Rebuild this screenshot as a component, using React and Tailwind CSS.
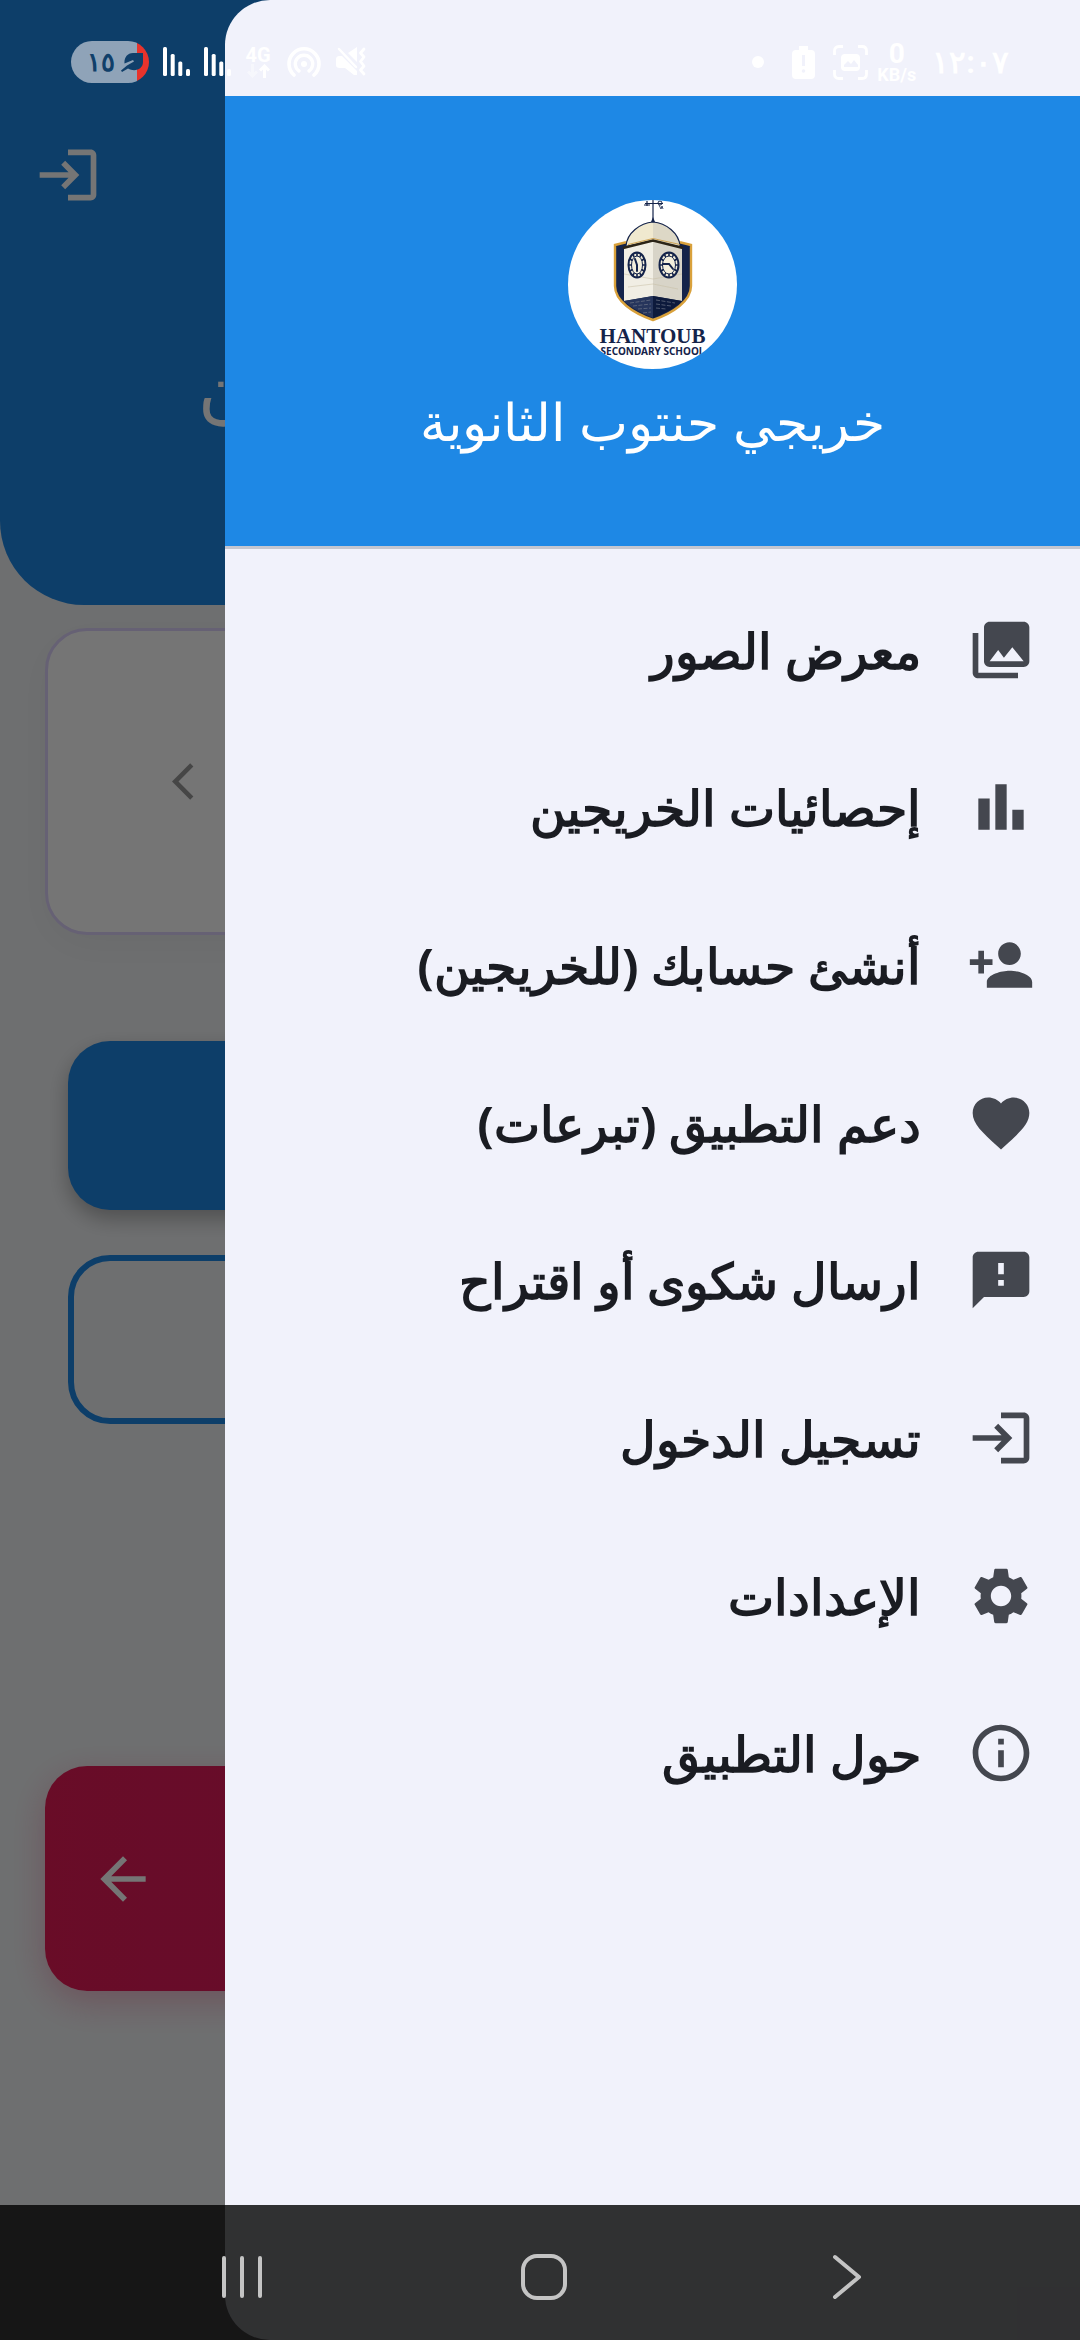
import {
  MdArrowBack,
  MdBarChart,
  MdFavorite,
  MdFeedback,
  MdInfoOutline,
  MdLogin,
  MdPersonAdd,
  MdPhotoLibrary,
  MdSettings,
} from "react-icons/md";

const menuItems = [
  { label: "معرض الصور", icon: MdPhotoLibrary },
  { label: "إحصائيات الخريجين", icon: MdBarChart },
  { label: "أنشئ حسابك (للخريجين)", icon: MdPersonAdd },
  { label: "دعم التطبيق (تبرعات)", icon: MdFavorite },
  { label: "ارسال شكوى أو اقتراح", icon: MdFeedback },
  { label: "تسجيل الدخول", icon: MdLogin },
  { label: "الإعدادات", icon: MdSettings },
  { label: "حول التطبيق", icon: MdInfoOutline },
];

const clockAngles = [0, 30, 60, 90, 120, 150, 180, 210, 240, 270, 300, 330];

function ClockFace({ x, rx, hands }) {
  return (
    <g transform={`translate(${x} 65)`}>
      <ellipse rx={rx} ry="12.5" fill="#f3eedc" stroke="#14234a" strokeWidth="2" />
      <ellipse rx={rx - 3} ry="9" fill="none" stroke="#14234a" strokeWidth="1" />
      {clockAngles.map((a) => {
        const s = Math.sin((a * Math.PI) / 180);
        const c = Math.cos((a * Math.PI) / 180);
        return (
          <line
            key={a}
            x1={s * (rx - 3)}
            y1={c * 9}
            x2={s * rx}
            y2={c * 12.5}
            stroke="#14234a"
            strokeWidth="1.6"
          />
        );
      })}
      <path d={hands} fill="none" stroke="#14234a" strokeWidth="2" strokeLinecap="round" />
    </g>
  );
}

function SchoolLogo() {
  return (
    <svg viewBox="0 0 169 169" className="size-[169px] rounded-full bg-white">
      {/* Shield */}
      <path
        d="M47 45 57 42.500H113L123 45V86C123 101 105 113 85 120 65 113 47 101 47 86Z"
        fill="#14234a"
        stroke="#d9a13b"
        strokeWidth="2.400"
      />

      {/* Tower */}
      <path d="M56 48 85 41V96L56 101Z" fill="#f1eee4" />
      <path d="M85 41 114 48V101L85 96Z" fill="#d8d4c8" />
      <path d="M56 74 85 79 114 74M60 87 85 84 110 89" fill="none" stroke="#c6bda2" strokeWidth="0.500" />
      <path d="M56 101 85 96V118C73 113 62 107 56 101Z" fill="#26355c" />
      <path d="M85 96 114 101C108 107 97 113 85 118Z" fill="#0d1a3c" />
      <path
        d="M62 103 83 100M65 106 83 104M70 109 83 108M75 113 83 112M88 100 107 103M88 104 103 106M88 108 98 109"
        stroke="#6f7687"
        strokeWidth="0.700"
        strokeDasharray="4 1.500"
      />

      {/* Dome */}
      <path d="M58 46C59 33 72 23 85 22 98 23 111 33 112 46L85 40Z" fill="#f0e9cf" />
      <path d="M85 22C98 23 111 33 112 46L85 40Z" fill="#ddd8c6" />
      <path d="M58 46C59 33 72 23 85 22 98 23 111 33 112 46" fill="none" stroke="#14234a" strokeWidth="1.200" />
      <path d="M55 48 85 40.500 115 48" fill="none" stroke="#2b2418" strokeWidth="2.600" />
      <path d="M60 44.500 85 38.500 112 44.500" fill="none" stroke="#c9973c" strokeWidth="0.800" />

      {/* Weather vane */}
      <path d="M85 0V20M77 3.500H95M79 1V6M76 5H82" stroke="#14234a" strokeWidth="1.200" />
      <circle cx="92" cy="3" r="2" fill="none" stroke="#14234a" strokeWidth="1" />
      <path d="M91 5 93 9 94 6 95 9" fill="none" stroke="#14234a" strokeWidth="0.800" />
      <path d="M83 22 85 17 87 22Z" fill="#14234a" />

      <ClockFace x={69} rx={8.5} hands="M-2-6 0 0V6" />
      <ClockFace x={101} rx={9.5} hands="M-6-1 0-1 4 4" />

      <text
        x="84.500"
        y="143"
        textAnchor="middle"
        fill="#14234a"
        className="font-['Liberation_Serif',serif] text-[21px] font-bold"
      >
        HANTOUB
      </text>
      <text
        x="84.500"
        y="155"
        textAnchor="middle"
        fill="#14234a"
        className="font-['Noto_Sans',sans-serif] text-[10px] font-bold"
      >
        SECONDARY SCHOOL
      </text>
    </svg>
  );
}

function SignalIcon() {
  return (
    <svg viewBox="0 0 28 30" className="h-[30px] w-7" fill="#fff">
      <rect x="0" y="0" width="4" height="29" rx="1.500" />
      <rect x="7.700" y="7" width="4" height="22" rx="1.500" />
      <rect x="15.300" y="14.500" width="4" height="14.500" rx="1.500" />
      <rect x="23" y="22" width="4" height="7" rx="1.500" />
    </svg>
  );
}

function StatusBar() {
  return (
    <div
      dir="ltr"
      className="absolute inset-x-0 top-0 z-30 flex h-24 items-center justify-between px-[71px] pt-7 font-['Roboto',sans-serif] text-white"
    >
      <div className="flex h-[42px] items-center">
        <div className="flex h-[42px] w-[78px] items-center justify-between overflow-hidden rounded-full bg-linear-to-r from-[#8fa3b8] from-85% to-[#e8332c] to-85% pr-[6px] pl-4 text-[#103f6a]">
          <span className="text-[26px] leading-none font-bold">١٥</span>
          <svg viewBox="0 0 22 19" className="h-[19px] w-[22px]">
            <path
              d="M22 0H12C6 0 3 5 3.500 10.500L12 7 13 8.500 6 12.500 0 17.500 1 19 7 15.500C14 19.500 22 16 22 9Z"
              fill="currentColor"
            />
          </svg>
        </div>

        <div className="ml-[14px] flex gap-[13px]">
          <SignalIcon />
          <SignalIcon />
        </div>

        <div className="ml-[13px] flex w-[26px] flex-col items-center">
          <span className="text-[20px] leading-[18px] font-bold">4G</span>
          <svg viewBox="0 0 24 14" className="h-[14px] w-6" fill="none" stroke="#fff" strokeWidth="3">
            <path d="M6.500 0V12M2 7.500 6.500 12 11 7.500" opacity="0.400" />
            <path d="M18.500 14V2M14 6.500 18.500 2 23 6.500" />
          </svg>
        </div>

        {/* Hotspot */}
        <svg viewBox="0 0 34 32" className="ml-4 h-8 w-[34px]" fill="none" stroke="#fff" strokeLinecap="round">
          <circle cx="17" cy="18" r="3" fill="#fff" stroke="none" />
          <path d="M12 25A8.700 8.700 0 1 1 22 25" strokeWidth="3.400" />
          <path d="M7 29A15 15 0 1 1 27 29" strokeWidth="3.600" />
        </svg>

        {/* Vibrate / mute */}
        <svg viewBox="0 0 30 30" className="ml-[15px] size-[30px]" fill="#fff">
          <path d="M0 13C0 10 1 9 4 9H6L21 24V28L18 28 9 21H4C1 21 0 20 0 18ZM12 6 21 0V15Z" />
          <path d="M3 2 20 20" stroke="#fff" strokeWidth="2.500" strokeLinecap="round" />
          <path
            d="M28 2 24.500 6 28 10 24.500 14.500 28 19 24.500 23 28 27"
            fill="none"
            stroke="#fff"
            strokeWidth="2.800"
            strokeLinecap="round"
            strokeLinejoin="round"
          />
        </svg>
      </div>

      <div className="flex h-[42px] items-center">
        <span className="size-3 rounded-full bg-white" />

        {/* Battery alert */}
        <svg viewBox="0 0 23 33" className="ml-7 h-[33px] w-[23px]">
          <path
            d="M7 0H16V4H19Q23 4 23 8V29Q23 33 19 33H4Q0 33 0 29V8Q0 4 4 4H7Z"
            fill="#fff"
          />
          <path d="M10 9H13V20H10Z" fill="#f1f2fb" />
          <circle cx="11.500" cy="25" r="1.800" fill="#f1f2fb" />
        </svg>

        {/* Screen capture */}
        <svg viewBox="0 0 35 35" className="ml-[18px] size-[35px]">
          <path
            d="M1.500 10V6Q1.500 1.500 6 1.500H10M25 1.500H29Q33.500 1.500 33.500 6V10M33.500 25V29Q33.500 33.500 29 33.500H25M10 33.500H6Q1.500 33.500 1.500 29V25"
            fill="none"
            stroke="#fff"
            strokeWidth="2.800"
          />
          <rect x="8" y="9" width="19" height="17" rx="4" fill="#fff" />
          <path d="M11 22V20L15 16 18 19 21 15 25 20V22Z" fill="#f1f2fb" />
        </svg>

        <div className="ml-[9px] flex w-[39px] flex-col items-center font-bold">
          <span className="text-[28px] leading-[26px]">0</span>
          <span className="text-[18px] leading-[16px]">KB/s</span>
        </div>

        <span className="ml-4 text-[31px] leading-none font-bold">١٢:٠٧</span>
      </div>
    </div>
  );
}

function HomePage() {
  return (
    <main dir="ltr" className="min-h-screen bg-[#f0f2f4]">
      {/* Header */}
      <header className="h-[605px] rounded-b-[84px] bg-[#1e88e5] pt-[141px] text-white">
        <button aria-label="تسجيل الدخول" className="ml-[34px] block">
          <MdLogin size={68} />
        </button>
        <h1 className="mt-[128px] pl-[198px] font-['Noto_Sans',sans-serif] text-[72px] leading-[100px]">
          ن
        </h1>
      </header>

      <section className="mx-[45px] mt-[23px] flex h-[307px] items-center rounded-[42px] border-3 border-[#ded3fc] bg-white pl-[124px] shadow-[0_11px_42px_rgba(0,0,0,0.04)]">
        <svg viewBox="0 0 12 20" className="h-[37px] w-[22px]" fill="#9a9a9a">
          <path d="M11.670 1.870 9.900 0.100 0 10l9.900 9.900 1.770-1.770L3.540 10z" />
        </svg>
      </section>

      <div className="mx-[68px] mt-[106px] flex flex-col gap-[45px]">
        <button
          aria-label="أنشئ حسابك"
          className="h-[169px] rounded-[42px] bg-[#1e88e5] shadow-[0_9px_20px_rgba(0,0,0,0.28)]"
        />
        <button
          aria-label="تسجيل الدخول"
          className="h-[169px] rounded-[42px] border-6 border-[#1e88e5]"
        />
      </div>

      <button
        aria-label="دعم التطبيق"
        className="mx-[45px] mt-[342px] flex h-[225px] w-[calc(100%-90px)] items-center rounded-[42px] bg-linear-to-r from-[#e41c56] to-[#d81b70] pl-11 text-white shadow-[0_11px_34px_rgba(226,28,90,0.28)]"
      >
        <MdArrowBack size={68} />
      </button>
    </main>
  );
}

function Drawer() {
  return (
    <aside
      dir="rtl"
      className="absolute inset-y-0 right-0 z-20 w-[79.17%] overflow-hidden rounded-l-[45px] bg-[#f1f2fb] pt-24 font-['Noto_Sans',sans-serif]"
    >
      <div className="flex h-[453px] flex-col items-center border-b-3 border-[#c4c6d0] bg-[#1e88e5] pt-[104px]">
        <SchoolLogo />
        <h2 className="mt-4 text-[52px] leading-[72px] text-white">خريجي حنتوب الثانوية</h2>
      </div>

      <nav className="mt-[22px] flex h-[1261px] flex-col">
        {menuItems.map(({ label, icon: Icon }) => (
          <a
            key={label}
            href="#"
            className="flex flex-1 items-center gap-[46px] pr-[45px] text-[#1a1c22]"
          >
            <Icon size={68} className="shrink-0 text-[#44474f]" />
            <span className="text-[49px] leading-[72px] font-bold">{label}</span>
          </a>
        ))}
      </nav>
    </aside>
  );
}

function NavigationBar() {
  return (
    <div
      dir="ltr"
      className="absolute inset-x-0 bottom-0 z-30 grid h-[135px] grid-cols-3 bg-black/80 pt-[9px] pr-[82px] pl-[91px] text-[#c4c4c4]"
    >
      <button aria-label="التطبيقات الأخيرة" className="flex items-center justify-center">
        <svg viewBox="0 0 42 44" className="h-11 w-[42px]" fill="none" stroke="currentColor" strokeWidth="4" strokeLinecap="round">
          <path d="M3 3V41M21 3V41M39 3V41" />
        </svg>
      </button>
      <button aria-label="الرئيسية" className="flex items-center justify-center">
        <svg viewBox="0 0 46 46" className="size-[46px]" fill="none" stroke="currentColor" strokeWidth="4">
          <rect x="2" y="2" width="42" height="42" rx="14" />
        </svg>
      </button>
      <button aria-label="رجوع" className="flex items-center justify-center">
        <svg viewBox="0 0 30 46" className="h-[46px] w-[30px]" fill="none" stroke="currentColor" strokeWidth="4" strokeLinecap="round" strokeLinejoin="round">
          <path d="M3 3 27 23 3 43" />
        </svg>
      </button>
    </div>
  );
}

export default function App() {
  return (
    <div className="relative min-h-screen overflow-hidden">
      <HomePage />
      <div className="absolute inset-0 z-10 bg-black/54" />
      <Drawer />
      <StatusBar />
      <NavigationBar />
    </div>
  );
}
